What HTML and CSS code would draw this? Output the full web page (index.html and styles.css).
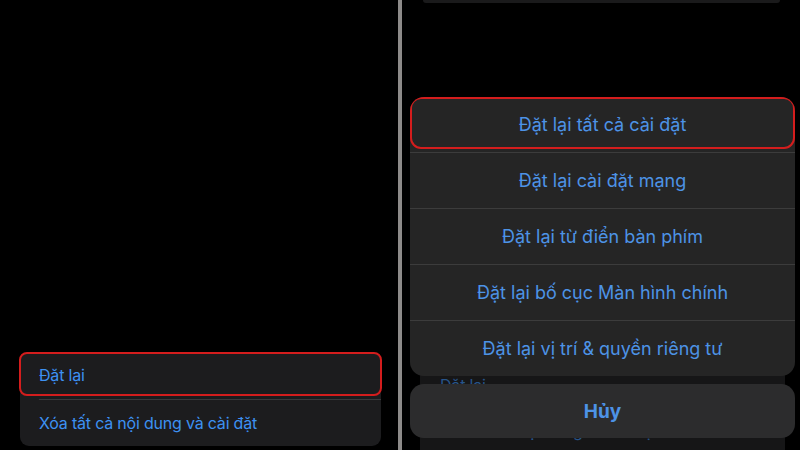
FILE: index.html
```html
<!DOCTYPE html>
<html lang="vi">
<head>
<meta charset="utf-8">
<title>Đặt lại</title>
<link rel="stylesheet" href="styles.css">
</head>
<body>
<div class="screen">
  <section class="panel left">
    <div class="card">
      <div class="row first"><span>Đặt lại</span><div class="mark"></div></div>
      <div class="sep"></div>
      <div class="row"><span>Xóa tất cả nội dung và cài đặt</span></div>
    </div>
  </section>
  <div class="divider"></div>
  <section class="panel right">
    <div class="remnant"></div>
    <div class="card dim">
      <div class="row first"><span>Đặt lại</span></div>
      <div class="sep"></div>
      <div class="row"><span>Xóa tất cả nội dung và cài đặt</span></div>
    </div>
    <div class="sheet">
      <div class="group">
        <div class="item"><span>Đặt lại tất cả cài đặt</span><div class="mark big"></div></div>
        <div class="item"><span>Đặt lại cài đặt mạng</span></div>
        <div class="item"><span>Đặt lại từ điển bàn phím</span></div>
        <div class="item"><span>Đặt lại bố cục Màn hình chính</span></div>
        <div class="item"><span>Đặt lại vị trí &amp; quyền riêng tư</span></div>
      </div>
      <div class="cancel">Hủy</div>
    </div>
  </section>
</div>
</body>
</html>
```
FILE: styles.css
```css
html, body {
  margin: 0;
  padding: 0;
  background: #000;
}
body {
  width: 800px;
  height: 450px;
  overflow: hidden;
  font-family: Inter, "Noto Sans", "Liberation Sans", sans-serif;
}
.screen {
  display: flex;
  width: 800px;
  height: 450px;
}
.panel {
  height: 450px;
  background: #000;
  overflow: hidden;
}
.left {
  width: 398px;
  display: flex;
  flex-direction: column;
  justify-content: flex-end;
  padding: 0 17px 4px 20px;
  box-sizing: border-box;
}
.divider {
  width: 4px;
  background: #8d8b8a;
}
.right {
  flex: 1;
  position: relative;
  display: flex;
  flex-direction: column;
  justify-content: space-between;
}
.card {
  background: #1c1c1e;
  border-radius: 9px;
}
.row {
  position: relative;
  height: 46px;
  display: flex;
  align-items: center;
  padding-left: 19px;
  font-size: 16px;
  letter-spacing: -0.2px;
  color: #3d91f2;
}
.row.first {
  height: 45px;
}
.sep {
  height: 1px;
  margin: 2px 0 0 19px;
  background: #3a3a3c;
}
.mark {
  position: absolute;
  left: -1px;
  right: -1px;
  top: 0;
  bottom: 1px;
  border: 2px solid #d41d1d;
  border-radius: 8px;
}
.remnant {
  height: 3px;
  margin: 0 20px 0 21px;
  background: #1a1a1b;
  border-radius: 0 0 10px 10px;
}
.card.dim {
  margin: 0 15px -8px 18px;
  background: #161617;
}
.card.dim .row {
  color: #27548a;
  padding-left: 20px;
}
.card.dim .row.first {
  height: 42px;
  padding-top: 11px;
  box-sizing: border-box;
}
.card.dim .row:last-child {
  height: 55px;
}
.card.dim .sep {
  background: #262628;
}
.sheet {
  position: absolute;
  left: 8px;
  right: 5px;
  top: 97px;
  display: flex;
  flex-direction: column;
  gap: 8px;
}
.group {
  background: #252525;
  border-radius: 14px;
  overflow: hidden;
}
.item {
  position: relative;
  height: 55px;
  display: flex;
  align-items: center;
  justify-content: center;
  font-size: 18px;
  color: #4d93e6;
  border-top: 1px solid #3c3c3c;
}
.item:first-child {
  border-top: 0;
}
.mark.big {
  left: 0;
  right: 0;
  top: 0;
  bottom: 3px;
  border-radius: 11px;
}
.cancel {
  height: 54px;
  display: flex;
  align-items: center;
  justify-content: center;
  background: #2c2c2d;
  border-radius: 14px;
  font-size: 19px;
  font-weight: 700;
  color: #4d93e6;
}
```
